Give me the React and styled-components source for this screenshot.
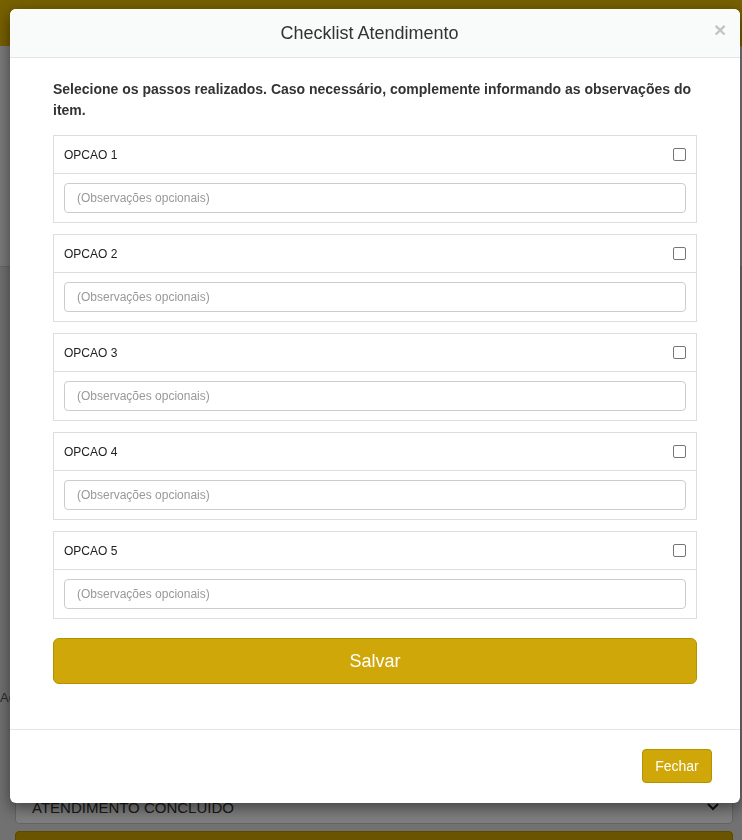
import styled, { createGlobalStyle } from "styled-components";

const GlobalStyle = createGlobalStyle`
  html, body {
    margin: 0;
    padding: 0;
    height: 840px;
    overflow: hidden;
    font-family: "Liberation Sans", Arial, sans-serif;
    color: #333;
  }
  * { box-sizing: border-box; }
`;

/* page behind the modal */
const Page = styled.div`
  height: 840px;
  display: flex;
  flex-direction: column;
  background: #f6f6f6;
`;

const TopBar = styled.div`
  height: 46px;
  background: #eec000;
  flex-shrink: 0;
`;

const UpperPanel = styled.div`
  height: 221px;
  border-bottom: 1px solid #d0d0d0;
  flex-shrink: 0;
`;

const LowerPanel = styled.div`
  flex: 1;
  background: #e2e2e2;
  padding: 423px 9px 0 0;
  display: flex;
  flex-direction: column;
`;

const Label = styled.div`
  font-size: 13px;
  line-height: 16px;
  color: #555;
  margin-bottom: 84px;
`;

const FakeSelect = styled.div`
  margin-left: 15px;
  height: 34px;
  border: 1px solid #c8c8c8;
  border-radius: 4px;
  background: #fff;
  display: flex;
  align-items: center;
  justify-content: space-between;
  padding: 0 12px 0 16px;
  font-size: 15px;
  text-transform: uppercase;
  color: #333;
`;

const GoldBar = styled.div`
  margin: 7px 0 0 15px;
  height: 40px;
  background: #d4a800;
  border-radius: 4px;
  border: 1px solid #b89200;
`;

/* modal */
const Backdrop = styled.div`
  position: fixed;
  inset: 0;
  background: rgba(0, 0, 0, 0.5);
`;

const Dialog = styled.div`
  position: fixed;
  left: 10px;
  top: 9px;
  width: 730px;
  background: #fff;
  border-radius: 6px;
  box-shadow: 0 5px 15px rgba(0, 0, 0, 0.5);
  overflow: hidden;
`;

const Header = styled.div`
  height: 49px;
  background: #f9fafa;
  border-bottom: 1px solid #e5e5e5;
  display: flex;
  align-items: center;
  padding: 0 15px;
`;

const Title = styled.h4`
  flex: 1;
  margin: 0;
  text-align: center;
  font-size: 18px;
  font-weight: normal;
  color: #333;
`;

const Close = styled.button`
  border: 0;
  background: none;
  padding: 0;
  width: 11px;
  font-family: "Liberation Sans", Arial, sans-serif;
  font-size: 21px;
  font-weight: bold;
  line-height: 1;
  color: #c4c4c4;
  margin-top: -7px;
  cursor: pointer;
`;

const Body = styled.div`
  padding: 21px 43px 45px;
`;

const Intro = styled.p`
  margin: 0 0 14px;
  font-size: 14px;
  font-weight: bold;
  line-height: 21px;
  color: #333;
`;

const Card = styled.div`
  border: 1px solid #ddd;
  margin-bottom: 11px;
`;

const CardHead = styled.div`
  height: 38px;
  border-bottom: 1px solid #ddd;
  display: flex;
  align-items: center;
  justify-content: space-between;
  padding: 0 10px;
  font-size: 12px;
  color: #222;
`;

const Check = styled.span`
  width: 13px;
  height: 13px;
  border: 1px solid #767676;
  border-radius: 2px;
  background: #fff;
`;

const CardBody = styled.div`
  padding: 9px 10px;
`;

const Input = styled.input`
  display: block;
  width: 100%;
  height: 30px;
  border: 1px solid #ccc;
  border-radius: 4px;
  padding: 0 12px;
  font-family: "Liberation Sans", Arial, sans-serif;
  font-size: 12px;
  color: #555;
  outline: none;
  &::placeholder { color: #999; }
`;

const SaveButton = styled.button`
  display: block;
  width: 100%;
  height: 46px;
  margin-top: 19px;
  border: 1px solid #b39200;
  border-radius: 6px;
  background: #cfa708;
  color: #fff;
  font-family: "Liberation Sans", Arial, sans-serif;
  font-size: 18px;
  cursor: pointer;
`;

const Footer = styled.div`
  border-top: 1px solid #e5e5e5;
  display: flex;
  justify-content: flex-end;
  padding: 19px 28px 20px;
`;

const CloseButton = styled.button`
  width: 70px;
  height: 34px;
  border: 1px solid #b39200;
  border-radius: 4px;
  background: #cfa708;
  color: #fff;
  font-family: "Liberation Sans", Arial, sans-serif;
  font-size: 14px;
  cursor: pointer;
`;

const Chevron = () => (
  <svg width="14" height="10" viewBox="0 0 14 10">
    <path d="M2 2l5 5 5-5" fill="none" stroke="#222" strokeWidth="2" />
  </svg>
);

const options = ["OPCAO 1", "OPCAO 2", "OPCAO 3", "OPCAO 4", "OPCAO 5"];

export default function App() {
  return (
    <>
      <GlobalStyle />
      <Page>
        <TopBar />
        <UpperPanel />
        <LowerPanel>
          <Label>Ação</Label>
          <FakeSelect>
            Atendimento concluido
            <Chevron />
          </FakeSelect>
          <GoldBar />
        </LowerPanel>
      </Page>
      <Backdrop />
      <Dialog>
        <Header>
          <Title>Checklist Atendimento</Title>
          <Close>×</Close>
        </Header>
        <Body>
          <Intro>
            Selecione os passos realizados. Caso necessário, complemente informando as observações do
            item.
          </Intro>
          {options.map((o) => (
            <Card key={o}>
              <CardHead>
                {o}
                <Check />
              </CardHead>
              <CardBody>
                <Input placeholder="(Observações opcionais)" />
              </CardBody>
            </Card>
          ))}
          <SaveButton>Salvar</SaveButton>
        </Body>
        <Footer>
          <CloseButton>Fechar</CloseButton>
        </Footer>
      </Dialog>
    </>
  );
}
